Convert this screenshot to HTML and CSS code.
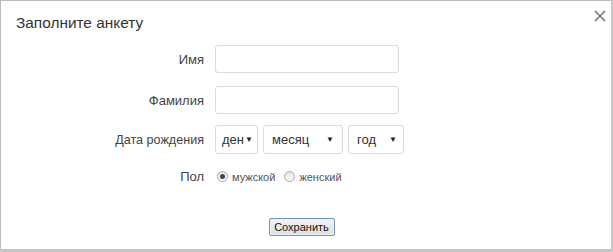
FILE: index.html
```html
<!DOCTYPE html>
<html lang="ru">
<head>
<meta charset="utf-8">
<link rel="stylesheet" href="styles.css">
</head>
<body>
<div class="dialog">
  <div class="head">
    <h1 class="title">Заполните анкету</h1>
    <span class="close">
      <svg width="12" height="12" viewBox="0 0 12 12"><path d="M1 1L11 11M11 1L1 11" stroke="#7a7a7a" stroke-width="1.7" fill="none"/></svg>
    </span>
  </div>
  <div class="form">
    <label class="lbl">Имя</label>
    <div class="ctl"><span class="input"></span></div>
    <label class="lbl">Фамилия</label>
    <div class="ctl"><span class="input"></span></div>
    <label class="lbl lbl-date">Дата рождения</label>
    <div class="ctl selects">
      <span class="select s-day">ден<i class="arrow">▼</i></span>
      <span class="select s-month">месяц<i class="arrow">▼</i></span>
      <span class="select s-year">год<i class="arrow">▼</i></span>
    </div>
    <label class="lbl lbl-sex">Пол</label>
    <div class="ctl radios">
      <span class="radio checked"></span><span class="rtext">мужской</span>
      <span class="radio"></span><span class="rtext">женский</span>
    </div>
  </div>
  <div class="actions"><span class="btn">Сохранить</span></div>
</div>
</body>
</html>
```
FILE: styles.css
```css
html, body { margin: 0; padding: 0; background: #fff; }
body { font-family: "Liberation Sans", Arial, sans-serif; color: #333; }
.dialog {
  box-sizing: border-box;
  width: 613px;
  height: 252px;
  border: 1px solid #bdbdbd;
  border-bottom: 3px solid #c4c4c4;
  border-right: 2px solid #c8c8c8;
  position: relative;
}
.head {
  display: flex;
  justify-content: space-between;
  align-items: flex-start;
  padding: 13px 5px 0 15px;
  height: 31px;
  box-sizing: border-box;
}
.title {
  margin: 0;
  font-size: 15.4px;
  font-weight: normal;
  color: #333;
  line-height: 18px;
}
.close { display: block; margin-top: -4px; padding: 0; line-height: 0; }
.form {
  display: grid;
  grid-template-columns: 203px auto;
  column-gap: 11px;
  row-gap: 13px;
  margin-top: 13px;
  align-items: center;
}
.lbl {
  text-align: right;
  font-size: 13px;
  color: #444;
}
.ctl { display: flex; align-items: center; }
.input {
  display: block;
  box-sizing: border-box;
  width: 184px;
  height: 28px;
  border: 1px solid #dcdcdc;
  border-radius: 3px;
  background: #fff;
}
.lbl-date, .selects { margin-top: -2px; }
.lbl-date { font-size: 12.6px; }
.selects { gap: 5px; }
.select {
  box-sizing: border-box;
  height: 29px;
  border: 1px solid #dcdcdc;
  border-radius: 3px;
  display: flex;
  align-items: center;
  justify-content: space-between;
  padding: 0 5px 0 6px;
  font-size: 13px;
  color: #333;
}
.arrow { font-style: normal; font-size: 8px; color: #222; }
.s-day { width: 43px; padding-right: 4px; }
.s-month { width: 80px; padding-right: 8px; padding-left: 8px; }
.s-year { width: 56px; padding-right: 6px; padding-left: 8px; }
.lbl-sex { margin-top: 2px; }
.radios { margin-top: 2px; }
.radio {
  box-sizing: border-box;
  width: 11px;
  height: 11px;
  border: 1px solid #aaa;
  border-radius: 50%;
  background: linear-gradient(#e8e8e8, #f8f8f8);
  margin: 0 4px 0 2px;
  position: relative;
}
.radio.checked::after {
  content: "";
  position: absolute;
  left: 2px; top: 2px;
  width: 5px; height: 5px;
  border-radius: 50%;
  background: #444;
}
.rtext { font-size: 11px; color: #555; margin-right: 7px; }
.actions { display: flex; justify-content: center; margin-top: 34px; padding-right: 9px; }
.btn {
  box-sizing: border-box;
  width: 66px;
  height: 18px;
  border: 1px solid #7096c4;
  border-radius: 2px;
  background: linear-gradient(#f4f4f4, #dedede);
  font-size: 11px;
  color: #111;
  display: flex;
  align-items: center;
  justify-content: center;
  box-shadow: inset 0 0 0 1px #e9f2fb;
}
```
